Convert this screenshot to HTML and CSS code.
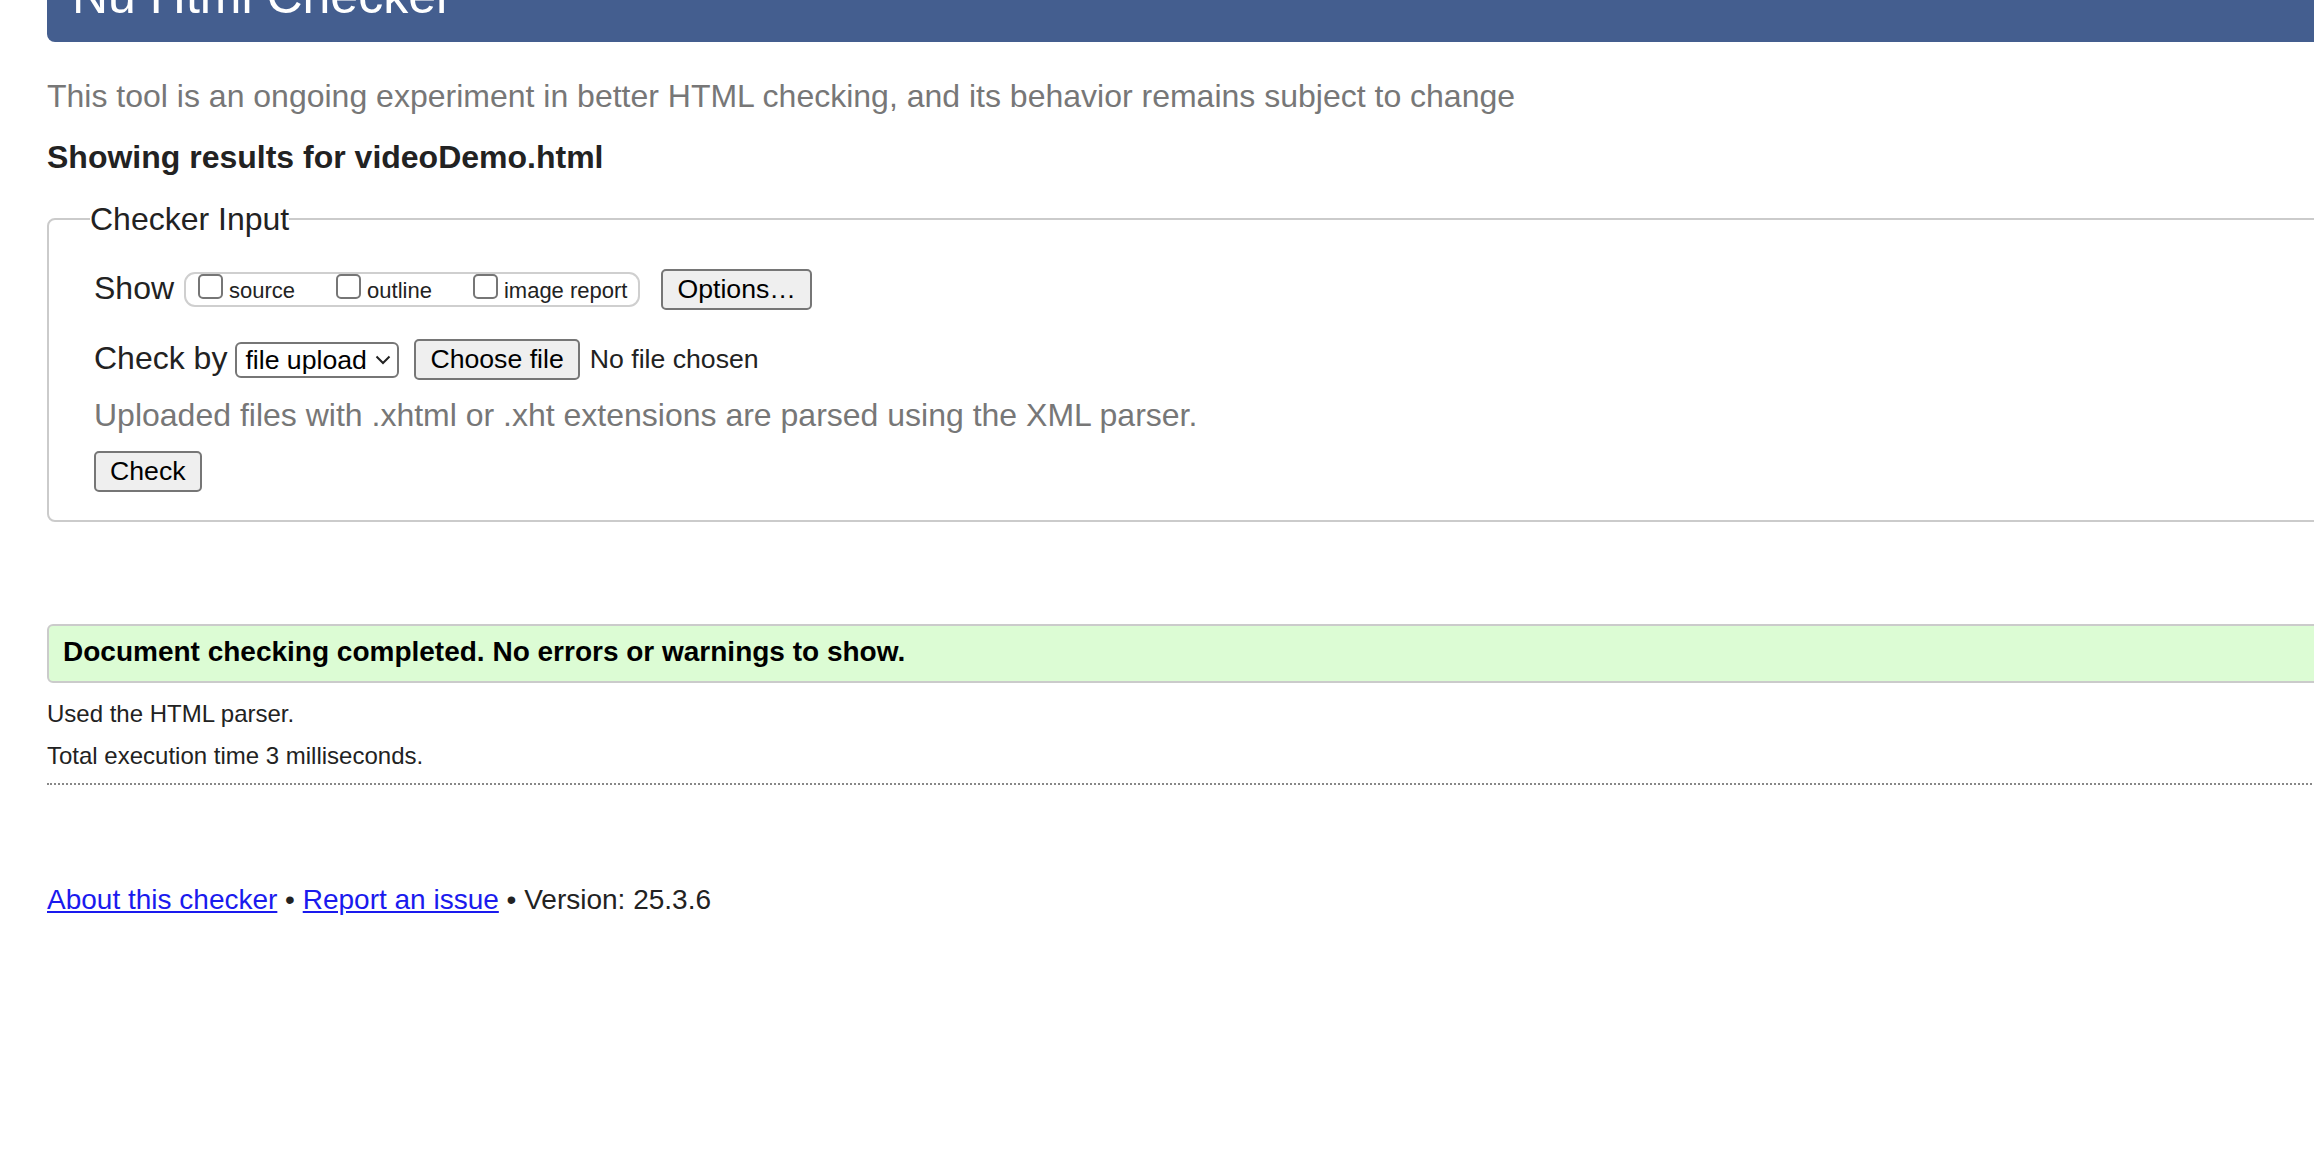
FILE: index.html
```html
<!DOCTYPE html>
<html lang="en">
<head>
<meta charset="utf-8">
<title>Showing results for videoDemo.html - Nu Html Checker</title>
<link rel="stylesheet" href="styles.css">
</head>
<body>
<div class="page">
  <h1 class="site-title">Nu Html Checker</h1>
  <p class="intro">This tool is an ongoing experiment in better HTML checking, and its behavior remains subject to change</p>
  <h2 class="results-title">Showing results for videoDemo.html</h2>
  <form class="checker-form">
    <fieldset class="checker-input">
      <legend class="checker-legend">Checker Input</legend>
      <div class="row show-row">
        <span class="row-label">Show</span>
        <div class="show-options">
          <label class="opt"><input type="checkbox" class="cb"><span class="opt-text">source</span></label>
          <label class="opt"><input type="checkbox" class="cb"><span class="opt-text">outline</span></label>
          <label class="opt"><input type="checkbox" class="cb"><span class="opt-text">image report</span></label>
        </div>
        <button type="button" class="btn btn-options">Options…</button>
      </div>
      <div class="row checkby-row">
        <span class="row-label">Check by</span>
        <div class="select-wrap">
          <select class="select"><option>file upload</option></select>
          <svg class="chevron" width="16" height="10" viewBox="0 0 16 10" aria-hidden="true"><path d="M1.5 1.5 L8 8 L14.5 1.5" fill="none" stroke="#222" stroke-width="2"/></svg>
        </div>
        <button type="button" class="btn btn-file">Choose file</button>
        <span class="file-status">No file chosen</span>
      </div>
      <p class="hint">Uploaded files with .xhtml or .xht extensions are parsed using the XML parser.</p>
      <button type="button" class="btn btn-check">Check</button>
    </fieldset>
  </form>
  <p class="success">Document checking completed. No errors or warnings to show.</p>
  <div class="meta">
    <p class="meta-line">Used the HTML parser.</p>
    <p class="meta-line meta-time">Total execution time 3 milliseconds.</p>
  </div>
  <hr class="divider">
  <p class="footer"><a class="footer-link" href="#">About this checker</a> • <a class="footer-link" href="#">Report an issue</a> • Version: 25.3.6</p>
</div>
</body>
</html>
```

FILE: styles.css
```css
html, body {
  overflow: hidden;
}

body {
  margin: 0;
  padding: 0 0 0 47px;
  background: #ffffff;
  color: #222222;
  font-family: "Liberation Sans", Arial, sans-serif;
}

.page {
  width: 2400px;
}

.site-title {
  margin: -33px 0 0 0;
  padding: 0 25px 17px;
  background: #445e8f;
  color: #ffffff;
  font-size: 50px;
  font-weight: normal;
  line-height: 58px;
  border-radius: 0 0 0 8px;
}

.intro {
  margin: 34px 0 0;
  font-size: 32px;
  line-height: 40px;
  color: #777777;
}

.results-title {
  margin: 21px 0 0;
  font-size: 32px;
  line-height: 40px;
  font-weight: bold;
  color: #222222;
}

.checker-form {
  margin: 0;
}

.checker-input {
  margin: 22px 0 0 0;
  padding: 30px 0 28px 45px;
  border: 2px solid #cbcbcb;
  border-radius: 8px;
  min-width: 0;
}

.checker-legend {
  padding: 0;
  margin-left: -4px;
  font-size: 32px;
  line-height: 40px;
  color: #222222;
}

.row {
  display: flex;
  align-items: center;
}

.row-label {
  font-size: 32px;
  line-height: 36px;
  padding-bottom: 4px;
  color: #222222;
}

.show-options {
  display: flex;
  align-items: flex-end;
  gap: 41px;
  margin-left: 10px;
  padding: 0 11px 2px 12px;
  border: 2px solid #cfcfcf;
  border-radius: 11px;
}

.opt {
  display: flex;
  align-items: flex-end;
}

.cb {
  appearance: none;
  -webkit-appearance: none;
  width: 25px;
  height: 25px;
  margin: 0 6px 4px 0;
  border: 2px solid #767676;
  border-radius: 5px;
  background: #ffffff;
}

.opt-text {
  font-size: 22px;
  line-height: 25px;
  color: #222222;
}

.btn {
  font-family: "Liberation Sans", Arial, sans-serif;
  font-size: 26.67px;
  line-height: 31px;
  padding: 3px 14px;
  color: #000000;
  background: #efefef;
  border: 2px solid #767676;
  border-radius: 5px;
}

.btn-options {
  margin-left: 21px;
}

.checkby-row {
  margin-top: 29px;
}

.select-wrap {
  position: relative;
  margin-left: 8px;
}

.select {
  appearance: none;
  -webkit-appearance: none;
  display: block;
  height: 36px;
  width: 164px;
  padding: 0 30px 0 8px;
  font-family: "Liberation Sans", Arial, sans-serif;
  font-size: 26.67px;
  color: #000000;
  background: #ffffff;
  border: 2px solid #767676;
  border-radius: 6px;
}

.chevron {
  position: absolute;
  right: 8px;
  top: 13px;
}

.btn-file {
  margin-left: 15px;
}

.file-status {
  margin-left: 10px;
  font-size: 26.67px;
  line-height: 31px;
  color: #222222;
}

.hint {
  margin: 15px 0 16px;
  font-size: 32px;
  line-height: 40px;
  color: #777777;
}

.btn-check {
  display: block;
}

.success {
  margin: 102px 0 0;
  padding: 8px 14px 11px;
  border: 2px solid #cbcbcb;
  border-radius: 6px;
  background: #dcfcd4;
  color: #000000;
  font-size: 28px;
  line-height: 36px;
  font-weight: bold;
}

.meta {
  margin-top: 15px;
}

.meta-line {
  margin: 0;
  font-size: 24px;
  line-height: 32px;
  color: #222222;
}

.meta-time {
  margin-top: 10px;
}

.divider {
  margin: 11px 0 0;
  border: none;
  border-top: 2px dotted #888888;
  height: 0;
}

.footer {
  margin: 97px 0 0;
  font-size: 28px;
  line-height: 36px;
  color: #222222;
}

.footer-link {
  color: #1a1aee;
  text-decoration: underline;
}
```
